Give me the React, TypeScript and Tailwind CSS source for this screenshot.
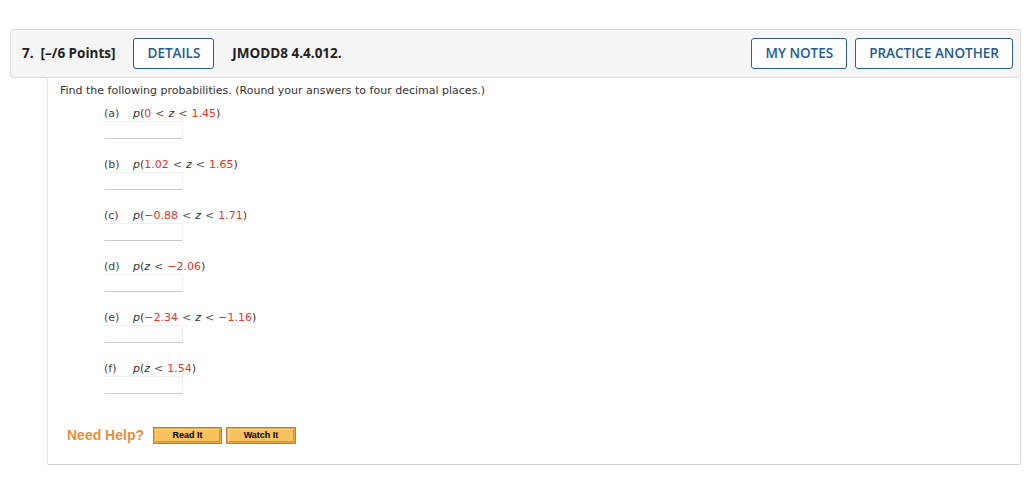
import React from "react"

const red = "text-[#e8352b]"

type Part = { t: string; red?: boolean; it?: boolean; op?: boolean }

const lt: Part = { t: "<", op: true }

const items: { label: string; parts: Part[] }[] = [
  {
    label: "(a)",
    parts: [
      { t: "p", it: true },
      { t: "(" },
      { t: "0", red: true },
      lt,
      { t: "z", it: true },
      lt,
      { t: "1.45", red: true },
      { t: ")" },
    ],
  },
  {
    label: "(b)",
    parts: [
      { t: "p", it: true },
      { t: "(" },
      { t: "1.02", red: true },
      lt,
      { t: "z", it: true },
      lt,
      { t: "1.65", red: true },
      { t: ")" },
    ],
  },
  {
    label: "(c)",
    parts: [
      { t: "p", it: true },
      { t: "(" },
      { t: "\u22120.88", red: true },
      lt,
      { t: "z", it: true },
      lt,
      { t: "1.71", red: true },
      { t: ")" },
    ],
  },
  {
    label: "(d)",
    parts: [
      { t: "p", it: true },
      { t: "(" },
      { t: "z", it: true },
      lt,
      { t: "\u22122.06", red: true },
      { t: ")" },
    ],
  },
  {
    label: "(e)",
    parts: [
      { t: "p", it: true },
      { t: "(" },
      { t: "\u22122.34", red: true },
      lt,
      { t: "z", it: true },
      lt,
      { t: "\u22121.16", red: true },
      { t: ")" },
    ],
  },
  {
    label: "(f)",
    parts: [
      { t: "p", it: true },
      { t: "(" },
      { t: "z", it: true },
      lt,
      { t: "1.54", red: true },
      { t: ")" },
    ],
  },
]

function HeaderButton({ children }: { children: React.ReactNode }) {
  return (
    <button className="h-[31px] px-[13px] rounded-[3px] border-[1.5px] border-[#2c5c8c] bg-white text-[13.5px] font-semibold text-[#245a8e] font-['Open_Sans',sans-serif]">
      {children}
    </button>
  )
}

function HelpButton({ children, w }: { children: React.ReactNode; w: string }) {
  return (
    <button
      className={`${w} h-[17px] border border-[#c47c2e] bg-[#e9a64a] p-[1px] font-['Liberation_Sans',Arial,sans-serif]`}
    >
      <span className="flex h-full w-full items-center justify-center border border-t-[#fbdc95] border-l-[#fbdc95] border-r-[#d38f3c] border-b-[#d38f3c] bg-[#f6c35f] text-[9px] font-bold leading-none text-black">
        {children}
      </span>
    </button>
  )
}

export default function App() {
  return (
    <div className="min-h-[485px] bg-white pt-[29px] pl-[10px]">
      <div className="w-[1011px]">
        <div className="flex h-[49px] items-center rounded-[3px] border border-[#dcdcdc] bg-[#f5f5f5] pl-[11px] pr-[7px] font-['Open_Sans',sans-serif] text-[13.5px] text-[#222]">
          <span className="font-bold">7.&nbsp; [–/6 Points]</span>
          <div className="ml-[18px]">
            <HeaderButton>DETAILS</HeaderButton>
          </div>
          <span className="ml-[18px] font-bold">JMODD8 4.4.012.</span>
          <div className="ml-auto flex gap-[8px]">
            <HeaderButton>MY NOTES</HeaderButton>
            <HeaderButton>PRACTICE ANOTHER</HeaderButton>
          </div>
        </div>
        <div className="ml-[37px] h-[387px] rounded-br-[3px] border-x border-b border-l-[#e6e6e6] border-r-[#dcdcdc] border-b-[#cfcfcf] pl-[12px] pt-[5px] font-['DejaVu_Sans',Verdana,sans-serif] text-[11px] text-[#333]">
          <p className="leading-[16px]">
            Find the following probabilities. (Round your answers to four decimal places.)
          </p>
          <div className="ml-[44px] mt-[7px] flex flex-col gap-[18px]">
            {items.map((it) => (
              <div key={it.label} className="flex flex-col">
                <div className="flex leading-[15px]">
                  <span className="w-[29px] text-[#444]">{it.label}</span>
                  <span className="whitespace-pre">
                    {it.parts.map((p, i) => (
                      <span
                        key={i}
                        className={`${p.red ? red : ""} ${p.it ? "italic" : ""} ${p.op ? "px-[4px] text-[#555]" : ""}`}
                      >
                        {p.t}
                      </span>
                    ))}
                  </span>
                </div>
                <div className="h-[18px] w-[79px] border border-[#f0f0f0] border-b-[#cacaca] border-l-white" />
              </div>
            ))}
          </div>
          <div className="ml-[7px] mt-[31px] flex items-center">
            <span className="font-['Liberation_Sans',Arial,sans-serif] text-[14px] font-bold text-[#ea8e3a]">
              Need Help?
            </span>
            <div className="ml-[9px] flex gap-[4px]">
              <HelpButton w="w-[69px]">Read It</HelpButton>
              <HelpButton w="w-[70px]">Watch It</HelpButton>
            </div>
          </div>
        </div>
      </div>
    </div>
  )
}
